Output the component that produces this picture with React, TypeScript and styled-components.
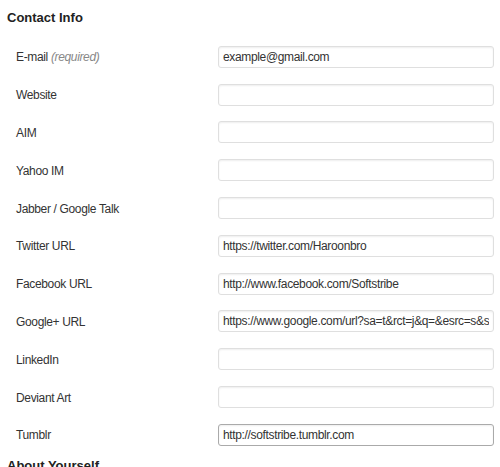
import React from 'react'
import styled, { createGlobalStyle } from 'styled-components'

const GlobalStyle = createGlobalStyle`
  html, body {
    margin: 0;
    background: #fff;
    overflow: hidden;
  }
  body {
    font-family: "Liberation Sans", Arial, sans-serif;
    color: #333;
  }
`

type Field = { label: string; required?: boolean; value?: string; focused?: boolean }

const fields: Field[] = [
  { label: 'E-mail', required: true, value: 'example@gmail.com' },
  { label: 'Website' },
  { label: 'AIM' },
  { label: 'Yahoo IM' },
  { label: 'Jabber / Google Talk' },
  { label: 'Twitter URL', value: 'https://twitter.com/Haroonbro' },
  { label: 'Facebook URL', value: 'http://www.facebook.com/Softstribe' },
  { label: 'Google+ URL', value: 'https://www.google.com/url?sa=t&rct=j&q=&esrc=s&source=web' },
  { label: 'LinkedIn' },
  { label: 'Deviant Art' },
  { label: 'Tumblr', value: 'http://softstribe.tumblr.com', focused: true },
]

export default function App() {
  return (
    <Page>
      <GlobalStyle />
      <Heading>Contact Info</Heading>
      <FormTable>
        {fields.map((f) => (
          <Row key={f.label}>
            <Label>
              {f.label}
              {f.required && <Required> (required)</Required>}
            </Label>
            <Input type="text" defaultValue={f.value ?? ''} $focused={f.focused} readOnly />
          </Row>
        ))}
      </FormTable>
      <Heading $gap={4}>About Yourself</Heading>
    </Page>
  )
}

const Page = styled.div`
  padding: 10px 0 0 7px;
`

const Heading = styled.h3<{ $gap?: number }>`
  margin: ${(p) => p.$gap ?? 0}px 0 12px;
  font-size: 13px;
  line-height: 16px;
  font-weight: bold;
  color: #222;
`

const FormTable = styled.div`
  display: flex;
  flex-direction: column;
`

const Row = styled.div`
  display: grid;
  grid-template-columns: 202px 276px;
  align-items: center;
  height: 37.8px;
  padding-left: 9px;
`

const Label = styled.label`
  font-size: 12px;
  letter-spacing: -0.35px;
  color: #333;
  padding-top: 1px;
`

const Required = styled.span`
  font-style: italic;
  color: #888;
`

const Input = styled.input<{ $focused?: boolean }>`
  box-sizing: border-box;
  width: 276px;
  height: 22px;
  margin: 0;
  padding: 0 4px;
  border: 1px solid ${(p) => (p.$focused ? '#aaa' : '#dfdfdf')};
  border-radius: 3px;
  box-shadow: inset 0 1px 2px rgba(0, 0, 0, 0.07);
  background: #fff;
  font-family: "Liberation Sans", Arial, sans-serif;
  font-size: 12px;
  letter-spacing: -0.35px;
  color: #333;
  outline: none;
`
